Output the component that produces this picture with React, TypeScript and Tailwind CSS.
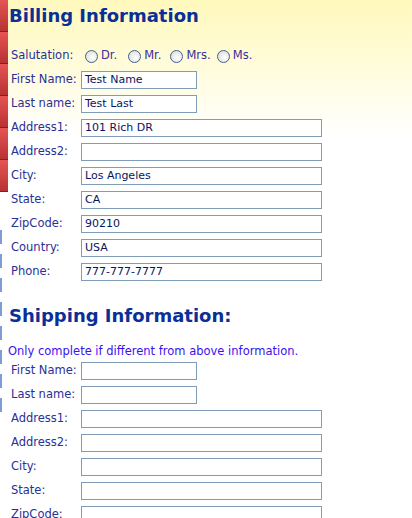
import React from 'react'

const font = { fontFamily: '"DejaVu Sans", Verdana, sans-serif' }

const billing = [
  { label: 'First Name:', value: 'Test Name', short: true },
  { label: 'Last name:', value: 'Test Last', short: true },
  { label: 'Address1:', value: '101 Rich DR' },
  { label: 'Address2:', value: '' },
  { label: 'City:', value: 'Los Angeles' },
  { label: 'State:', value: 'CA' },
  { label: 'ZipCode:', value: '90210' },
  { label: 'Country:', value: 'USA' },
  { label: 'Phone:', value: '777-777-7777' },
]

const shipping = [
  { label: 'First Name:', short: true },
  { label: 'Last name:', short: true },
  { label: 'Address1:' },
  { label: 'Address2:' },
  { label: 'City:' },
  { label: 'State:' },
  { label: 'ZipCode:' },
  { label: 'Country:' },
  { label: 'Phone:' },
]

function Row({ label, value, short }: { label: string; value?: string; short?: boolean }) {
  return (
    <div className="flex h-[24px] items-center pl-[3px]">
      <span className="w-[70px] text-[11.5px] text-[#2b2f96]">{label}</span>
      <div
        className={`flex h-[18px] items-center border border-[#7f9db9] bg-white pl-[3px] text-[11px] text-[#0a1460] ${
          short ? 'w-[116px]' : 'w-[241px]'
        }`}
      >
        {value}
      </div>
    </div>
  )
}

function Radio({ label, gap = 'mr-[11px]' }: { label: string; gap?: string }) {
  return (
    <label className={`${gap} flex items-center gap-[3px]`}>
      <span className="h-[13px] w-[13px] rounded-full border border-[#3f6190] bg-[radial-gradient(circle_at_60%_60%,#ffffff,#d6d6d0)]" />
      <span className="text-[11.5px] text-[#3b2fa0]">{label}</span>
    </label>
  )
}

export default function App() {
  return (
    <div className="flex h-[518px] w-[412px] overflow-hidden bg-white" style={font}>
      {/* left strip */}
      <div className="flex w-[8px] shrink-0 flex-col">
        {[0, 1, 2, 3, 4, 5].map((i) => (
          <div
            key={i}
            className="h-[32px] border-b border-[#8a1e1e] bg-gradient-to-b from-[#e65454] to-[#b83232]"
          />
        ))}
        <div className="mt-[38px] flex flex-col gap-[10px]">
          {[0, 1, 2, 3, 4, 5, 6, 7].map((i) => (
            <div key={i} className="h-[14px] w-[2px] bg-[#7f9cd6]" />
          ))}
        </div>
      </div>

      {/* main */}
      <div className="flex-1 pt-[1px] bg-[linear-gradient(to_bottom,#fff9bd_0px,#fffcdc_70px,#ffffff_135px,#ffffff_100%)]">
        <h1 className="flex h-[28px] items-center pl-[1px] text-[18px] font-bold text-[#0a2f96]">
          Billing Information
        </h1>
        <div className="h-[15px]" />
        <div className="flex h-[24px] items-center pl-[3px]">
          <span className="w-[74px] text-[11.5px] text-[#2b2f96]">Salutation:</span>
          <Radio label="Dr." />
          <Radio label="Mr." gap="mr-[9px]" />
          <Radio label="Mrs." gap="mr-[6px]" />
          <Radio label="Ms." />
        </div>
        {billing.map((r) => (
          <Row key={r.label} label={r.label} value={r.value} short={r.short} />
        ))}

        <h2 className="mt-[17px] flex h-[28px] items-center pl-[1px] text-[18px] font-bold text-[#0a2f96]">
          Shipping Information:
        </h2>
        <p className="mt-[15px] flex h-[15px] items-center text-[11.5px] text-[#3a10f0]">
          Only complete if different from above information.
        </p>
        {shipping.map((r) => (
          <Row key={r.label} label={r.label} short={r.short} />
        ))}
      </div>
    </div>
  )
}
